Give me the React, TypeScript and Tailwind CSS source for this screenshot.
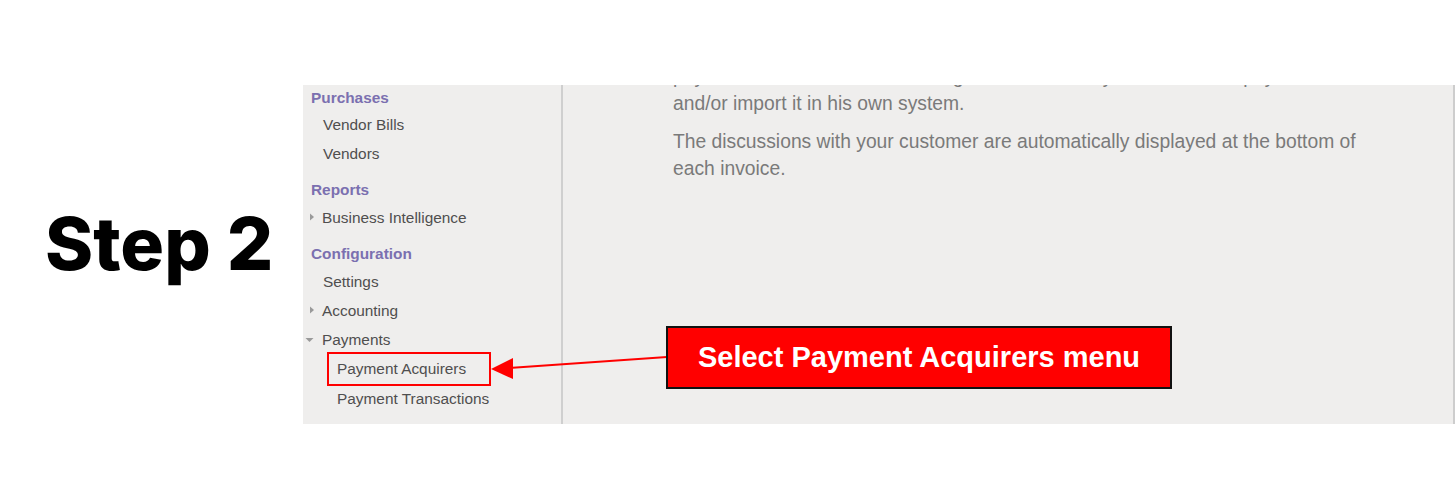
import React from "react";

const RightCaret = () => (
  <svg width="6" height="8" viewBox="0 0 6 8" className="shrink-0">
    <path d="M1 0.5 L5 4 L1 7.5 Z" fill="#9a9a9a" />
  </svg>
);

const DownCaret = () => (
  <svg width="9" height="6" viewBox="0 0 9 6" className="shrink-0">
    <path d="M0.5 1 L8.5 1 L4.5 5 Z" fill="#9a9a9a" />
  </svg>
);

function Heading({ children, first }: { children: React.ReactNode; first?: boolean }) {
  return (
    <div
      className={`${first ? "h-[25px]" : "h-[26px] mt-[9px]"} flex items-center pl-[8px] text-[15.4px] font-bold text-[#7b70b0]`}
    >
      {children}
    </div>
  );
}

function Item({
  children,
  caret,
  indent = 20,
  tall,
}: {
  children: React.ReactNode;
  caret?: "right" | "down";
  indent?: number;
  tall?: boolean;
}) {
  return (
    <div
      className={`${tall ? "h-[30px]" : "h-[29px]"} flex items-center text-[15.4px] text-[#4f4f4f] relative`}
    >
      {caret === "right" && (
        <span className="absolute left-[6px] top-[10px]">
          <RightCaret />
        </span>
      )}
      {caret === "down" && (
        <span className="absolute left-[2px] top-[12px]">
          <DownCaret />
        </span>
      )}
      <span style={{ paddingLeft: indent }}>{children}</span>
    </div>
  );
}

export default function App() {
  return (
    <div
      className="w-[1455px] h-[489px] bg-white flex overflow-hidden"
      style={{ fontFamily: '"Liberation Sans", Arial, sans-serif' }}
    >
      <div className="w-[303px] shrink-0 flex items-center pl-[45px] pb-[2px]">
        <span
          className="text-[73px] leading-none font-extrabold text-black"
          style={{ fontFamily: 'Inter, "Noto Sans", sans-serif' }}
        >
          Step 2
        </span>
      </div>

      <div className="relative mt-[85px] h-[339px] flex-1 bg-[#efeeed] flex overflow-hidden border-r-2 border-[#cdcdcd]">
        {/* Sidebar */}
        <div className="w-[260px] shrink-0 border-r-2 border-[#cfcfcf] flex flex-col">
          <Heading first>Purchases</Heading>
          <Item>Vendor Bills</Item>
          <Item>Vendors</Item>
          <Heading>Reports</Heading>
          <Item caret="right" indent={19}>Business Intelligence</Item>
          <Heading>Configuration</Heading>
          <Item>Settings</Item>
          <Item caret="right" indent={19}>Accounting</Item>
          <Item caret="down" indent={19}>Payments</Item>
          <Item indent={34} tall>Payment Acquirers</Item>
          <Item indent={34}>Payment Transactions</Item>
        </div>

        {/* Content */}
        <div className="flex-1 pl-[110px]">
          <div className="w-[700px] mt-[-22px] text-[19.3px] leading-[27px] text-[#7a7a7a]">
            <p className="whitespace-nowrap">
              payments online. Your customer gets the invoice by email and can pay
              <br />
              and/or import it in his own system.
            </p>
            <p className="mt-[11px]">
              The discussions with your customer are automatically displayed at the bottom of each
              invoice.
            </p>
          </div>
        </div>

        {/* Annotation overlay */}
        <div className="absolute left-[24px] top-[267px] w-[164px] h-[34px] border-2 border-[#ff0000]" />
        <svg
          className="absolute left-0 top-0 pointer-events-none"
          width="1152"
          height="339"
          viewBox="0 0 1152 339"
        >
          <line x1="364" y1="272" x2="206" y2="283" stroke="#ff0000" strokeWidth="2" />
          <path d="M188 284 L210 273 L210 294 Z" fill="#ff0000" />
        </svg>
        <div className="absolute left-[363px] top-[241px] w-[506px] h-[63px] bg-[#ff0000] border-2 border-[#111] flex items-center justify-center">
          <span className="text-white font-bold text-[29px] leading-none">
            Select Payment Acquirers menu
          </span>
        </div>
      </div>
    </div>
  );
}
